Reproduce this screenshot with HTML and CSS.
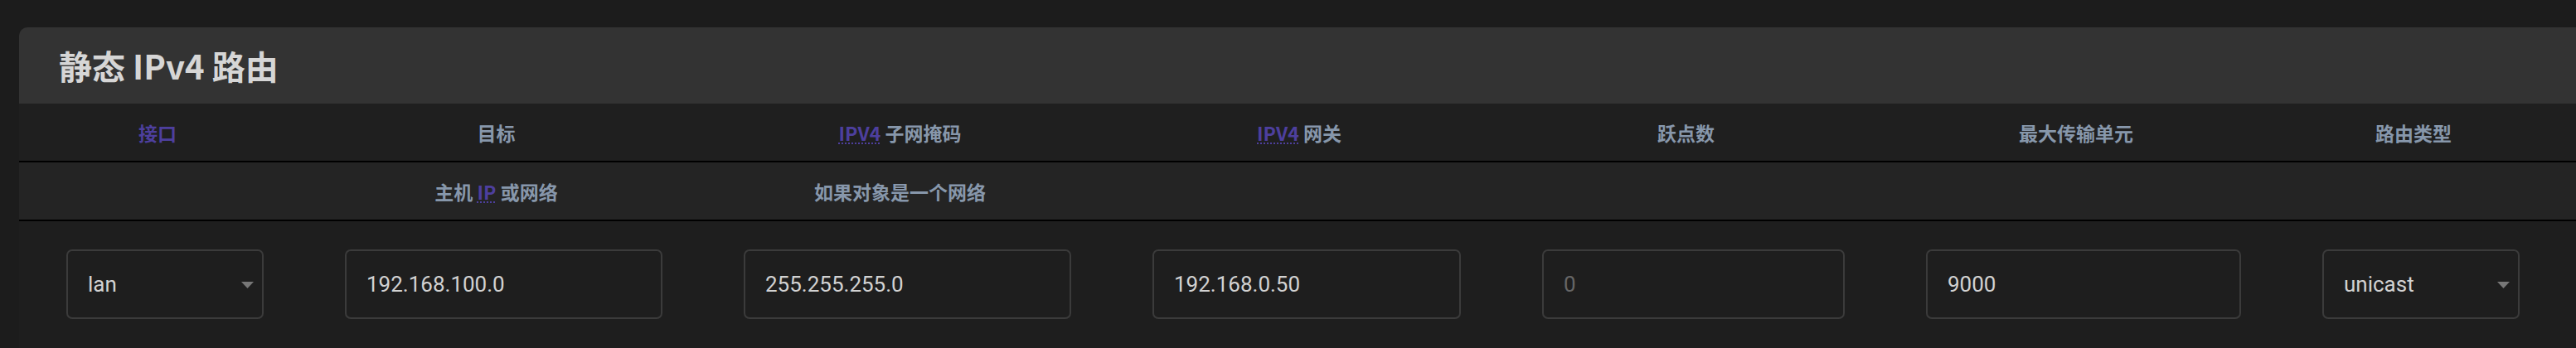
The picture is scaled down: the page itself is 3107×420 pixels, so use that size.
FILE: index.html
```html
<!DOCTYPE html>
<html lang="zh-CN">
<head>
<meta charset="utf-8">
<title>静态 IPv4 路由</title>
<link rel="stylesheet" href="styles.css">
</head>
<body>
<div class="page">
  <section class="card">
    <h3 class="card-head">静态 IPv4 路由</h3>
    <div class="table">
      <div class="row row-head">
        <div class="th"><span class="link">接口</span></div>
        <div class="th"><span>目标</span></div>
        <div class="th"><span><abbr class="abbr">IPV4</abbr> 子网掩码</span></div>
        <div class="th"><span><abbr class="abbr">IPV4</abbr> 网关</span></div>
        <div class="th"><span>跃点数</span></div>
        <div class="th"><span>最大传输单元</span></div>
        <div class="th"><span>路由类型</span></div>
      </div>
      <div class="row row-desc">
        <div class="th"></div>
        <div class="th"><span>主机 <abbr class="abbr">IP</abbr> 或网络</span></div>
        <div class="th"><span>如果对象是一个网络</span></div>
        <div class="th"></div>
        <div class="th"></div>
        <div class="th"></div>
        <div class="th"></div>
      </div>
      <div class="row row-data">
        <div class="td">
          <div class="select">
            <span class="select-val">lan</span>
            <svg class="caret" width="15" height="8" viewBox="0 0 15 8"><polygon points="0,0 15,0 7.5,8" fill="#777"/></svg>
          </div>
        </div>
        <div class="td"><input class="input" type="text" value="192.168.100.0"></div>
        <div class="td"><input class="input" type="text" value="255.255.255.0"></div>
        <div class="td"><input class="input" type="text" value="192.168.0.50"></div>
        <div class="td"><input class="input" type="text" placeholder="0"></div>
        <div class="td"><input class="input" type="text" value="9000"></div>
        <div class="td">
          <div class="select">
            <span class="select-val">unicast</span>
            <svg class="caret" width="15" height="8" viewBox="0 0 15 8"><polygon points="0,0 15,0 7.5,8" fill="#777"/></svg>
          </div>
        </div>
      </div>
    </div>
  </section>
</div>
</body>
</html>
```

FILE: styles.css
```css
html, body {
  margin: 0;
  padding: 0;
  background: #1c1c1c;
  overflow: hidden;
}

.page {
  padding: 33px 0 0 23px;
  width: 3200px;
}

.card {
  width: 3120px;
  border-radius: 10px 10px 0 0;
  overflow: hidden;
  background: #1e1e1e;
}

.card-head {
  margin: 0;
  height: 92px;
  display: flex;
  align-items: center;
  padding-left: 48px;
  background: #333333;
  color: #d6d6d6;
  font-family: "Noto Sans CJK SC", "Noto Sans", sans-serif;
  font-weight: 700;
  font-size: 40px;
}

.table {
  display: flex;
  flex-direction: column;
}

.row {
  display: grid;
  grid-template-columns: 344px 481px 493px 470px 463px 478px 336px 1fr;
}

.row-head {
  height: 69px;
  background: #1f1f1f;
  border-bottom: 2px solid #000;
}

.row-desc {
  height: 69px;
  background: #242424;
  border-bottom: 2px solid #000;
}

.row-data {
  background: #1e1e1e;
  padding-top: 34px;
  height: 153px;
  box-sizing: border-box;
}

.th {
  display: flex;
  align-items: center;
  justify-content: center;
  padding: 0 58px 0 40px;
  font-family: "Noto Sans CJK SC", "Noto Sans", sans-serif;
  font-weight: 700;
  font-size: 23px;
  color: #8797ab;
  white-space: nowrap;
}

.row > .th:first-child {
  padding-left: 48px;
}

.link {
  color: #4d3f9e;
}

.abbr {
  color: #4d3f9e;
  text-decoration: underline dotted #4d3f9e;
  text-decoration-thickness: 2px;
  text-underline-offset: 3px;
}

.td {
  padding: 0 49px;
  box-sizing: border-box;
}

.row > .td:first-child {
  padding-left: 57px;
}

.input,
.select {
  box-sizing: border-box;
  width: 100%;
  height: 84px;
  margin: 0;
  padding: 0 24px;
  background: #1e1e1e;
  border: 2px solid #3b3b3b;
  border-radius: 7px;
  color: #d2d2d2;
  font-family: Roboto, "Liberation Sans", sans-serif;
  font-size: 26px;
  outline: none;
}

.input::placeholder {
  color: #666;
}

.select {
  position: relative;
  display: flex;
  align-items: center;
}

.caret {
  position: absolute;
  right: 10px;
  top: 37px;
}
```
